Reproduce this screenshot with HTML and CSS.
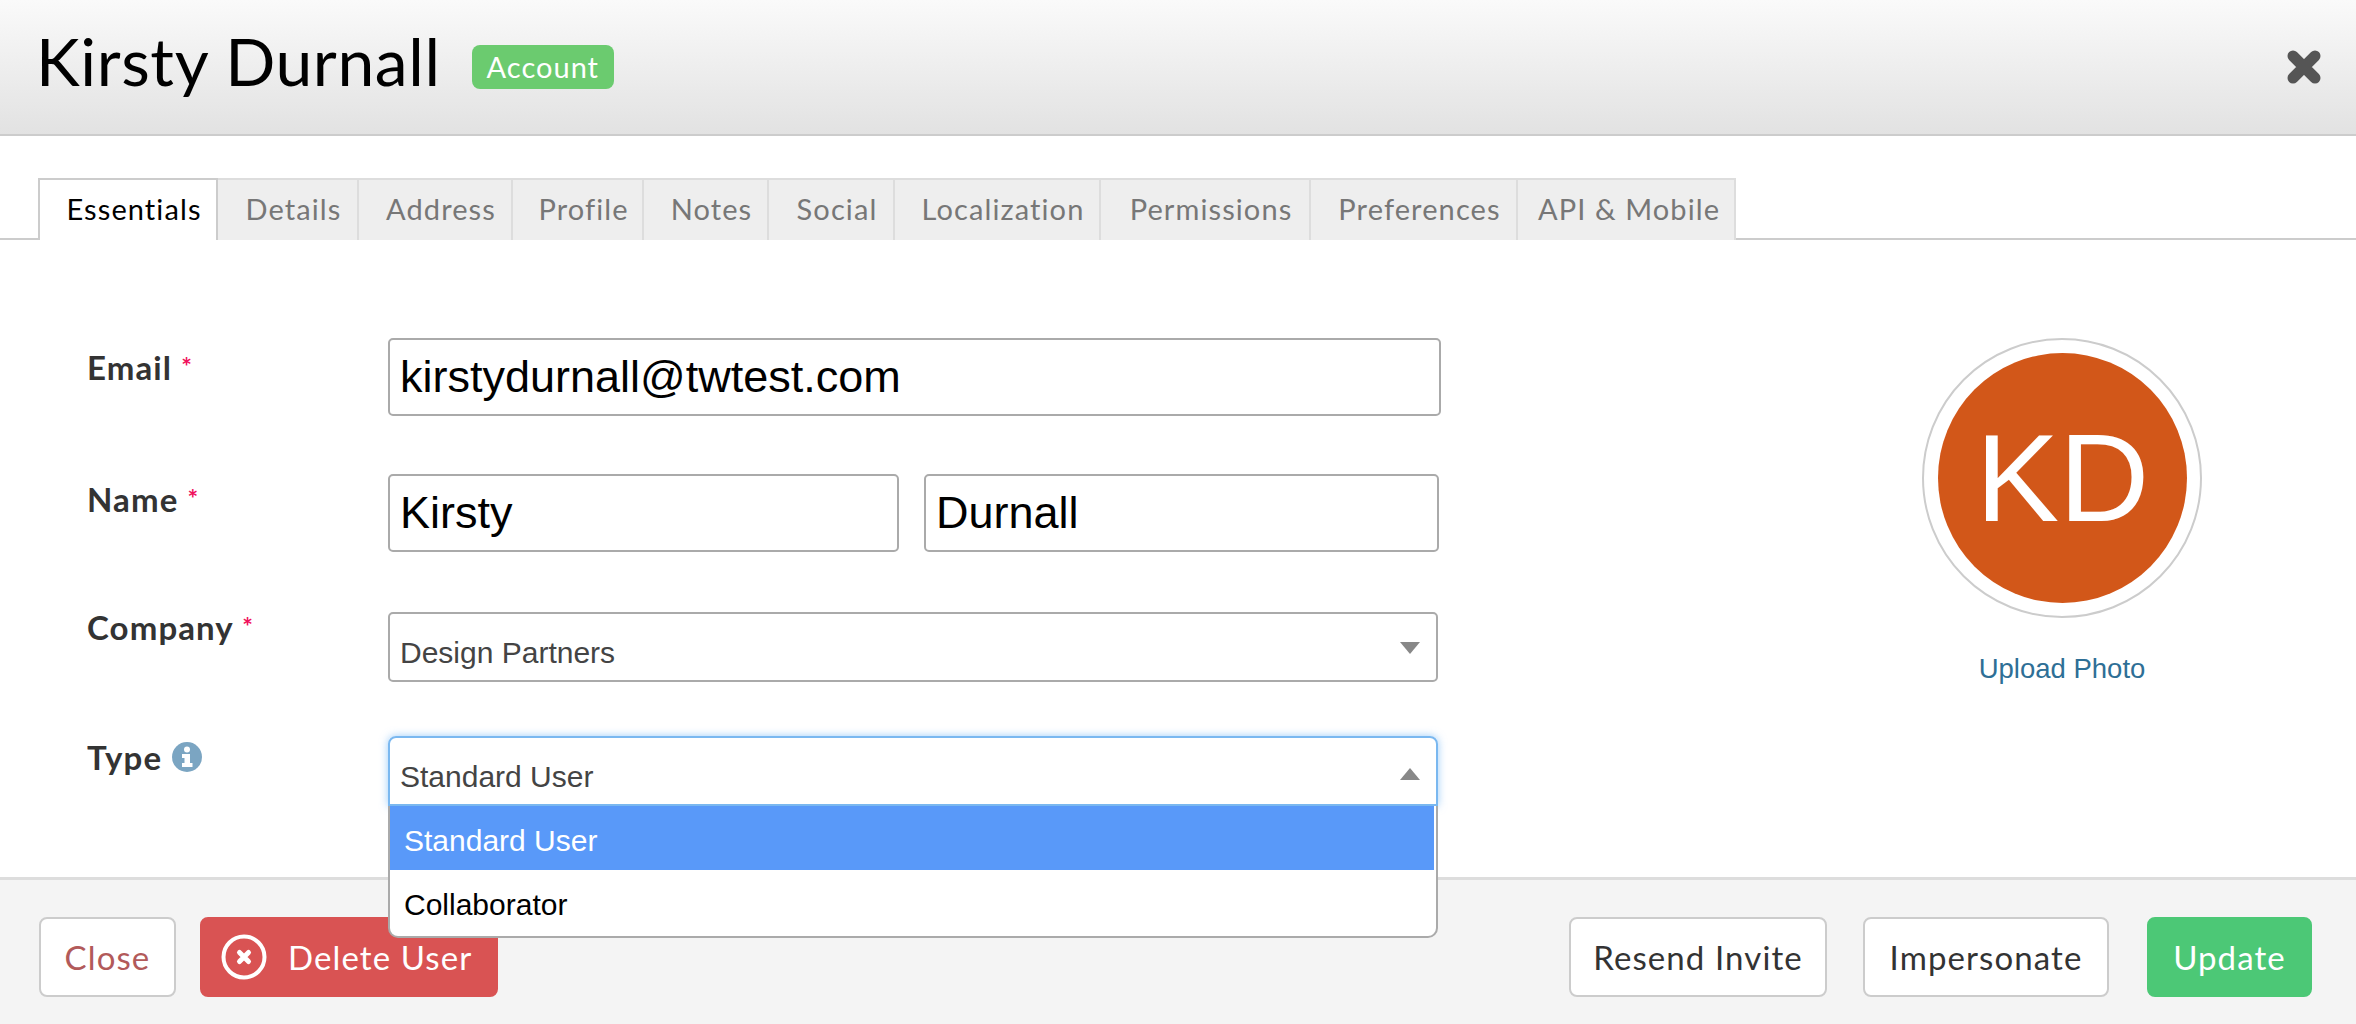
FILE: index.html
```html
<!DOCTYPE html>
<html lang="en">
<head>
  <meta charset="UTF-8">
  <title>Kirsty Durnall</title>
  <link rel="stylesheet" href="styles.css">
</head>
<body>
  <header class="top">
    <h1>Kirsty Durnall</h1>
    <span class="badge">Account</span>
    <svg class="close-x" viewBox="0 0 36 36" width="36" height="36">
      <path d="M7 7 L29 29 M29 7 L7 29" stroke="#555" stroke-width="11" stroke-linecap="round"/>
    </svg>
  </header>

  <main class="content">
    <nav class="tabs">
      <a class="tab active t-essentials">Essentials</a>
      <a class="tab t-details">Details</a>
      <a class="tab t-address">Address</a>
      <a class="tab t-profile">Profile</a>
      <a class="tab t-notes">Notes</a>
      <a class="tab t-social">Social</a>
      <a class="tab t-local">Localization</a>
      <a class="tab t-perm">Permissions</a>
      <a class="tab t-pref">Preferences</a>
      <a class="tab t-api">API &amp; Mobile</a>
    </nav>

    <div class="panel">
      <form class="form">
        <div class="row row-email">
          <label>Email <span class="req">*</span></label>
          <div class="input w-email">kirstydurnall@twtest.com</div>
        </div>
        <div class="row row-name">
          <label>Name <span class="req">*</span></label>
          <div class="pair">
            <div class="input w-first">Kirsty</div>
            <div class="input w-last">Durnall</div>
          </div>
        </div>
        <div class="row row-company">
          <label>Company <span class="req">*</span></label>
          <div class="select">Design Partners</div>
        </div>
        <div class="row row-type">
          <label>Type
            <svg class="info" viewBox="0 0 30 30" width="30" height="30">
              <circle cx="15" cy="15" r="15" fill="#7ba5c2"/>
              <circle cx="15" cy="7.5" r="3" fill="#fff"/>
              <path d="M10 12 H18 V21 H20.5 V25 H10 V21 H12.5 V16 H10 Z" fill="#fff"/>
            </svg>
          </label>
          <div class="select open">
            Standard User
            <ul class="options">
              <li class="selected">Standard User</li>
              <li>Collaborator</li>
            </ul>
          </div>
        </div>
      </form>

      <aside class="photo">
        <div class="avatar-ring"><div class="avatar">KD</div></div>
        <a class="upload">Upload Photo</a>
      </aside>
    </div>
  </main>

  <footer class="bottom">
    <div class="btns">
      <button class="btn btn-close">Close</button>
      <button class="btn btn-delete">
        <svg viewBox="0 0 46 46" width="46" height="46">
          <circle cx="23" cy="23" r="20.5" fill="none" stroke="#fff" stroke-width="4"/>
          <path d="M18.5 18.5 L27.5 27.5 M27.5 18.5 L18.5 27.5" stroke="#fff" stroke-width="5" stroke-linecap="round"/>
        </svg>
        Delete User
      </button>
    </div>
    <div class="btns">
      <button class="btn btn-resend">Resend Invite</button>
      <button class="btn btn-imp">Impersonate</button>
      <button class="btn btn-update">Update</button>
    </div>
  </footer>
</body>
</html>
```

FILE: styles.css
```css
* {
  box-sizing: border-box;
}
html, body {
  height: 100%;
}
body {
  margin: 0;
  display: flex;
  flex-direction: column;
  overflow: hidden;
  font-family: 'Lato', sans-serif;
  color: #333;
  background: #fff;
}
.top {
  height: 136px;
  display: flex;
  align-items: center;
  padding: 0 34px 0 36px;
  background: linear-gradient(#fafafa, #e2e2e2);
  border-bottom: 2px solid #ccc;
}
.top h1 {
  margin: 0 0 12px;
  font-size: 66px;
  font-weight: 400;
  letter-spacing: 0.6px;
  color: #000;
  line-height: 1;
}
.badge {
  margin-left: 31px;
  padding: 0 15px;
  height: 44px;
  line-height: 44px;
  background: #6bcb6f;
  color: #fff;
  font-size: 29px;
  letter-spacing: 1px;
  border-radius: 8px;
}
.close-x {
  margin-left: auto;
}
.content {
  flex: 1;
}
.tabs {
  display: flex;
  height: 62px;
  margin-top: 42px;
  padding-left: 38px;
  border-bottom: 2px solid #ccc;
}
.tab {
  height: 62px;
  line-height: 58px;
  padding-left: 12px;
  text-align: center;
  font-size: 29px;
  letter-spacing: 1.1px;
  color: #777;
  background: #eee;
  border: 2px solid #ddd;
  border-left: 0;
  border-bottom: 0;
}
.tab.active {
  color: #000;
  background: #fff;
  border: 2px solid #ccc;
  border-bottom: 0;
}
.t-essentials { width: 180px; }
.t-details { width: 141px; }
.t-address { width: 154px; }
.t-profile { width: 131px; }
.t-notes { width: 125px; }
.t-social { width: 126px; }
.t-local { width: 206px; }
.t-perm { width: 210px; }
.t-pref { width: 207px; }
.t-api { width: 218px; padding-left: 6px; }

.panel {
  display: flex;
  padding: 98px 0 0 88px;
}
.form {
  width: 1353px;
}
.row {
  display: flex;
}
.row label {
  width: 300px;
  flex: none;
  margin-left: -1px;
  margin-right: 1px;
  font-size: 33px;
  font-weight: 700;
  letter-spacing: 1.1px;
  line-height: 40px;
  color: #333;
}
.row-email label { padding-top: 8px; }
.row-name { margin-top: 58px; }
.row-name label { padding-top: 4px; }
.row-company { margin-top: 60px; }
.row-company label { margin-top: -6px; }
.row-type { margin-top: 54px; }
.row-type label { margin-top: 1px; display: flex; align-items: center; gap: 10px; height: 40px; }
.req {
  color: #f0115d;
  font-size: 25px;
  vertical-align: 4px;
}
.info {
  flex: none;
}
.input {
  height: 78px;
  line-height: 74px;
  padding: 0 10px;
  border: 2px solid #aaa;
  border-radius: 5px;
  font-family: 'Liberation Sans', Arial, sans-serif;
  font-size: 45px;
  color: #000;
}
.w-email { width: 1053px; }
.pair {
  display: flex;
  gap: 25px;
}
.w-first { width: 511px; }
.w-last { width: 515px; }
.select {
  position: relative;
  width: 1050px;
  height: 70px;
  line-height: 77px;
  padding: 0 10px;
  border: 2px solid #aaa;
  border-radius: 5px;
  font-family: 'Liberation Sans', Arial, sans-serif;
  font-size: 30px;
  color: #444;
}
.select::after {
  content: "";
  position: absolute;
  right: 16px;
  top: 28px;
  border-left: 10px solid transparent;
  border-right: 10px solid transparent;
  border-top: 12px solid #888;
}
.select.open {
  border-color: #7ab8f0;
  border-radius: 8px 8px 0 0;
  box-shadow: 0 0 8px rgba(90, 170, 245, 0.6);
}
.select.open::after {
  top: 30px;
  border-top: 0;
  border-bottom: 12px solid #888;
}
.options {
  position: absolute;
  top: 68px;
  left: -2px;
  width: 1050px;
  margin: 0;
  padding: 0 2px 0 0;
  list-style: none;
  background: #fff;
  border: 2px solid #aaa;
  border-top: 0;
  border-radius: 0 0 10px 10px;
  z-index: 5;
  color: #000;
}
.options li {
  height: 64px;
  line-height: 69px;
  padding-left: 14px;
}
.options li + li {
  height: 66px;
}
.options .selected {
  background: #5999f9;
  color: #fff;
}

.photo {
  display: flex;
  flex-direction: column;
  align-items: center;
  margin-left: 481px;
}
.avatar-ring {
  width: 280px;
  height: 280px;
  padding: 13px 13px 13px 14px;
  border: 2px solid #ccc;
  border-radius: 50%;
}
.avatar {
  height: 100%;
  border-radius: 50%;
  background: #d25719;
  color: #fff;
  text-align: center;
  line-height: 250px;
  font-family: 'Liberation Sans', Arial, sans-serif;
  font-size: 125px;
}
.upload {
  margin-top: 35px;
  font-family: 'Liberation Sans', Arial, sans-serif;
  font-size: 27.5px;
  color: #2e6f96;
}

.bottom {
  height: 147px;
  display: flex;
  justify-content: space-between;
  padding: 37px 44px 0 39px;
  background: #f4f4f4;
  border-top: 3px solid #ddd;
}
.btns {
  display: flex;
  gap: 36px;
}
.btns:first-child {
  gap: 24px;
}
.btn {
  height: 80px;
  display: flex;
  align-items: center;
  justify-content: center;
  font-family: 'Lato', sans-serif;
  font-size: 33px;
  letter-spacing: 1.1px;
  color: #333;
  background: #fff;
  border: 2px solid #ccc;
  border-radius: 8px;
}
.btn-close { width: 137px; color: #b25a5a; }
.btn-delete {
  width: 298px;
  justify-content: flex-start;
  padding-left: 19px;
  gap: 21px;
  color: #fff;
  background: #d95353;
  border-color: #d95353;
}
.btn-resend { width: 258px; }
.btn-imp { width: 246px; }
.btn-update {
  width: 165px;
  margin-left: 2px;
  color: #fff;
  background: #4cc876;
  border-color: #4cc876;
}
```
